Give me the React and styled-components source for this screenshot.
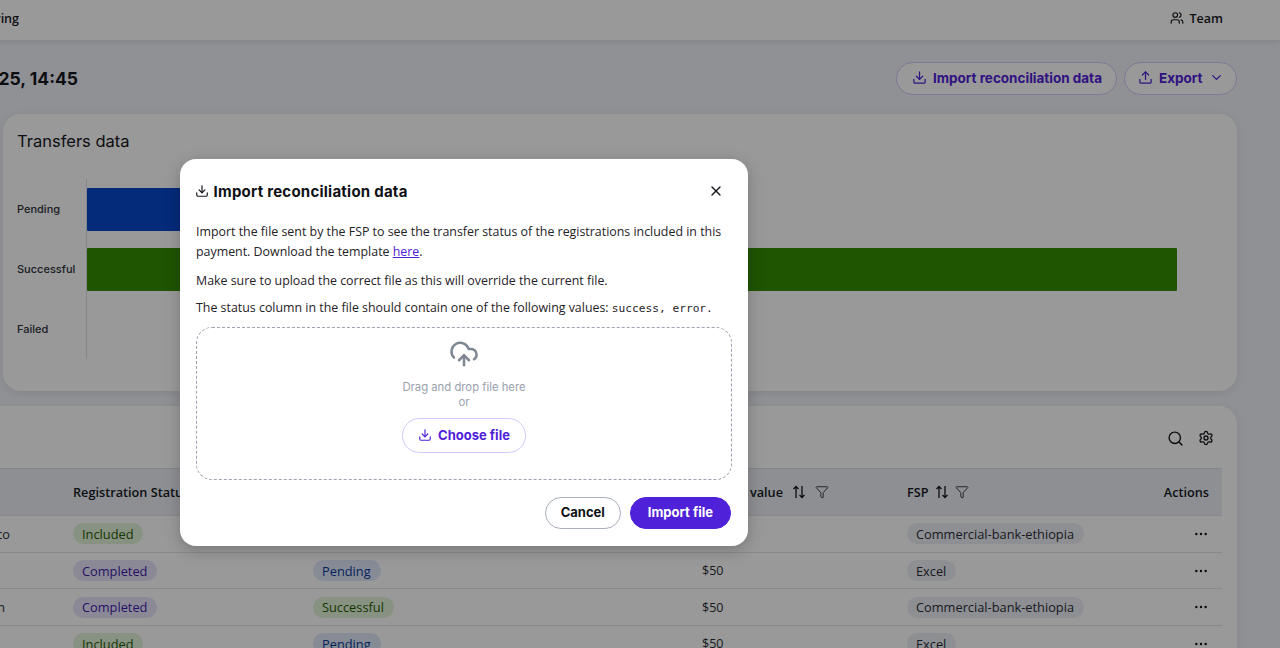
import React from 'react';
import styled, { createGlobalStyle } from 'styled-components';
import {
  ChevronDown,
  CloudUpload,
  Download,
  Ellipsis,
  Funnel,
  Search,
  Settings,
  Upload,
  Users,
  X,
} from 'lucide-react';

const heading = `Inter, "Liberation Sans", sans-serif`;
const body = `"Open Sans", "Noto Sans", sans-serif`;
const purple = '#4f21d8';

const GlobalStyle = createGlobalStyle`
  html, body {
    margin: 0;
    height: 100%;
    overflow: hidden;
    background: #f0f2f7;
    font-family: ${body};
    color: #16181d;
  }
  * { box-sizing: border-box; }
`;

const Viewport = styled.div`
  position: relative;
  width: 1280px;
  height: 648px;
  overflow: hidden;
`;

// the page is scrolled sideways in the reference, so its first 200px are cut off
const Page = styled.div`
  display: flex;
  flex-direction: column;
  width: 1480px;
  margin-left: -200px;
`;

const TopBar = styled.header`
  display: flex;
  align-items: center;
  justify-content: space-between;
  height: 41px;
  padding: 0 57px 4px 0;
  background: #fff;
  border-bottom: 1px solid #dfe3ea;
  box-shadow: 0 2px 6px rgba(30, 40, 60, 0.08);
  font-size: 12.5px;
  font-weight: 600;
`;

const NavLeft = styled.span`
  width: 219px;
  text-align: right;
`;

const NavRight = styled.span`
  display: flex;
  align-items: center;
  gap: 6px;
`;

const TitleRow = styled.div`
  display: flex;
  align-items: center;
  justify-content: space-between;
  height: 33px;
  margin-top: 21px;
  padding-right: 43px;
`;

const PageTitle = styled.h1`
  width: 278px;
  margin: 0;
  font-family: ${heading};
  font-size: 17.5px;
  font-weight: 700;
  text-align: right;
  white-space: nowrap;
`;

const Actions = styled.div`
  display: flex;
  gap: 7px;
`;

const Button = styled.button`
  display: inline-flex;
  align-items: center;
  justify-content: center;
  gap: 6px;
  height: ${(p) => p.$height || 33}px;
  padding: 0 ${(p) => p.$pad || 15}px 2px;
  border: 1px solid
    ${(p) => (p.$variant === 'solid' ? purple : p.$variant === 'plain' ? '#a9b0bb' : '#d3c8fb')};
  border-radius: 999px;
  background: ${(p) => (p.$variant === 'solid' ? purple : '#fff')};
  color: ${(p) => (p.$variant === 'solid' ? '#fff' : p.$variant === 'plain' ? '#0f1116' : purple)};
  font-family: ${heading};
  font-size: ${(p) => p.$size || 13}px;
  font-weight: 700;
  white-space: nowrap;
`;

const ChartCard = styled.section`
  height: 277px;
  margin: 19px 43px 0 203px;
  padding: 17px 14px;
  border-radius: 18px;
  background: #fff;
  box-shadow: 0 2px 8px rgba(30, 40, 60, 0.1);
`;

const CardTitle = styled.h2`
  margin: 0;
  font-family: ${heading};
  font-size: 16.5px;
  line-height: 21px;
  font-weight: 400;
`;

const Chart = styled.div`
  display: grid;
  grid-template-columns: 69px 1fr;
  grid-auto-rows: 60px;
  margin-top: 27px;
`;

const ChartLabel = styled.div`
  display: flex;
  align-items: center;
  font-family: ${heading};
  font-size: 11px;
  font-weight: 500;
  color: #2f333b;
`;

const ChartTrack = styled.div`
  display: flex;
  align-items: center;
  border-left: 1px solid #dde0e6;
`;

const ChartBar = styled.div`
  height: 43px;
  border-radius: 1px;
  background: ${(p) => p.$color};
`;

const TableCard = styled.section`
  height: 400px;
  margin: 15px 43px 0 0;
  padding: 0 15px 0 0;
  border-radius: 18px;
  background: #fff;
  box-shadow: 0 2px 8px rgba(30, 40, 60, 0.1);
`;

const TableTools = styled.div`
  display: flex;
  align-items: center;
  justify-content: flex-end;
  gap: 14px;
  height: 62px;
  padding: 2px 8px 0 0;
`;

const HeadRow = styled.div`
  display: grid;
  grid-template-columns: 273px 240px 382px 212px 1fr auto;
  align-items: center;
  height: 48px;
  background: #ebeff5;
  border-top: 1px solid #d8e0ea;
  border-bottom: 1px solid #dfe3ea;
  font-size: 12.7px;
  font-weight: 600;
`;

const DataRow = styled(HeadRow)`
  height: 36.7px;
  background: #fff;
  border-top: 0;
  font-weight: 400;
`;

const HeadCell = styled.div`
  display: flex;
  align-items: center;
  gap: ${(p) => p.$gap || 8}px;
  white-space: nowrap;
  overflow: hidden;
`;

const ActionCell = styled.div`
  display: flex;
  justify-content: flex-end;
  padding-right: 13px;
`;

const NameCell = styled.div`
  padding-right: ${(p) => p.$inset}px;
  text-align: right;
  color: #2b2e36;
`;

const ValueCell = styled.div`
  padding-left: 7px;
  font-size: 12.5px;
  color: #2b2e36;
`;

const PILLS = {
  green: ['#e3f3da', '#235c00'],
  purple: ['#e9e4fb', '#3e1aa8'],
  blue: ['#dfe8f9', '#0a3a99'],
  grey: ['#eceff4', '#2b2e36'],
};

const Pill = styled.span`
  display: inline-flex;
  align-items: center;
  height: 21px;
  padding: 0 10px 0 9px;
  border-radius: 999px;
  background: ${(p) => PILLS[p.$tone][0]};
  color: ${(p) => PILLS[p.$tone][1]};
  font-size: 12.8px;
  font-weight: 500;
`;

const Backdrop = styled.div`
  position: absolute;
  inset: 0;
  padding: 159px 0 0 179.5px;
  background: rgba(0, 0, 0, 0.4);
`;

const Dialog = styled.div`
  display: flex;
  flex-direction: column;
  width: 568px;
  height: 387px;
  padding: 0 16px 0 16.5px;
  border-radius: 16px;
  background: #fff;
  box-shadow: 0 4px 16px rgba(0, 0, 0, 0.22);
`;

const DialogHead = styled.div`
  display: flex;
  align-items: center;
  justify-content: space-between;
  height: 63px;
  padding: 1px 8px 0 0;
  flex: none;
`;

const DialogTitle = styled.h2`
  display: flex;
  align-items: center;
  gap: 5px;
  margin: 0 0 0 -1.5px;
  font-family: ${heading};
  font-size: 15px;
  letter-spacing: 0.24px;
  font-weight: 700;
  color: #0f1116;
`;

const Paragraph = styled.p`
  margin: 0 0 ${(p) => p.$gap}px;
  font-size: 12.4px;
  line-height: 20px;
  color: #1f2228;

  a {
    color: ${purple};
  }
  code {
    font-family: "DejaVu Sans Mono", "Liberation Mono", monospace;
    font-size: 11.2px;
  }
`;

const DropZone = styled.div`
  display: flex;
  flex-direction: column;
  align-items: center;
  flex: none;
  width: 536px;
  height: 153px;
  padding-top: 11px;
  border: 1px dashed #9ca3ae;
  border-radius: 16px;
`;

const DropText = styled.div`
  margin-top: 11px;
  font-family: ${heading};
  font-size: 11.3px;
  line-height: 15px;
  text-align: center;
  color: #9aa1ac;
`;

const ChooseWrap = styled.div`
  margin-top: 8px;
`;

const DialogFoot = styled.div`
  display: flex;
  justify-content: flex-end;
  gap: 9px;
  margin-top: 17px;
  padding-right: 0.5px;
`;

const SortIcon = () => (
  <svg width="14" height="14" viewBox="0 0 14 14" fill="none" stroke="currentColor" strokeWidth="1.3">
    <path d="M4 13V1.5M1.5 4L4 1.5 6.5 4" />
    <path d="M10 1v11.5M7.5 10l2.5 2.5 2.5-2.5" />
  </svg>
);

const rows = [
  { name: 'Francisco', inset: 63, reg: ['Included', 'green'], fsp: 'Commercial-bank-ethiopia' },
  { name: 'Amal', inset: 120, reg: ['Completed', 'purple'], status: ['Pending', 'blue'], fsp: 'Excel' },
  { name: 'Martin', inset: 68, reg: ['Completed', 'purple'], status: ['Successful', 'green'], fsp: 'Commercial-bank-ethiopia' },
  { name: 'Ines', inset: 120, reg: ['Included', 'green'], status: ['Pending', 'blue'], fsp: 'Excel' },
];

const bars = [
  { label: 'Pending', color: '#0747cb', width: 300 },
  { label: 'Successful', color: '#348c00', width: 1090 },
  { label: 'Failed', color: 'transparent', width: 0 },
];

const App = () => (
  <Viewport>
    <GlobalStyle />
    <Page>
      <TopBar>
        <NavLeft>Monitoring</NavLeft>
        <NavRight>
          <Users size={14} />
          Team
        </NavRight>
      </TopBar>

      <TitleRow>
        <PageTitle>Payment 01/07/2025, 14:45</PageTitle>
        <Actions>
          <Button $size={13.5} $pad={14.5}>
            <Download size={15} />
            Import reconciliation data
          </Button>
          <Button $size={13.5} $pad={12.5}>
            <Upload size={15} />
            Export
            <ChevronDown size={15} />
          </Button>
        </Actions>
      </TitleRow>

      <ChartCard>
        <CardTitle>Transfers data</CardTitle>
        <Chart>
          {bars.map((bar) => (
            <React.Fragment key={bar.label}>
              <ChartLabel>{bar.label}</ChartLabel>
              <ChartTrack>
                <ChartBar $color={bar.color} style={{ width: bar.width }} />
              </ChartTrack>
            </React.Fragment>
          ))}
        </Chart>
      </ChartCard>

      <TableCard>
        <TableTools>
          <Search size={17} />
          <Settings size={16} />
        </TableTools>
        <HeadRow>
          <HeadCell>Name</HeadCell>
          <HeadCell>Registration Status</HeadCell>
          <HeadCell>Transfer Status</HeadCell>
          <HeadCell $gap={9}>
            Transfer value <SortIcon /> <Funnel size={14} strokeWidth={1.4} />
          </HeadCell>
          <HeadCell $gap={6}>
            FSP <SortIcon /> <Funnel size={14} strokeWidth={1.4} />
          </HeadCell>
          <ActionCell>Actions</ActionCell>
        </HeadRow>
        {rows.map((row) => (
          <DataRow key={row.name}>
            <NameCell $inset={row.inset}>{row.name}</NameCell>
            <div>
              <Pill $tone={row.reg[1]}>{row.reg[0]}</Pill>
            </div>
            <div>{row.status && <Pill $tone={row.status[1]}>{row.status[0]}</Pill>}</div>
            <ValueCell>$50</ValueCell>
            <div>
              <Pill $tone="grey">{row.fsp}</Pill>
            </div>
            <ActionCell>
              <Ellipsis size={16} strokeWidth={1.7} />
            </ActionCell>
          </DataRow>
        ))}
      </TableCard>
    </Page>

    <Backdrop>
      <Dialog>
        <DialogHead>
          <DialogTitle>
            <Download size={14} />
            Import reconciliation data
          </DialogTitle>
          <X size={16} />
        </DialogHead>
        <Paragraph $gap={9}>
          Import the file sent by the FSP to see the transfer status of the registrations included
          in this payment. Download the template <a href="#here">here</a>.
        </Paragraph>
        <Paragraph $gap={7}>
          Make sure to upload the correct file as this will override the current file.
        </Paragraph>
        <Paragraph $gap={8}>
          The status column in the file should contain one of the following values:{' '}
          <code>success, error.</code>
        </Paragraph>
        <DropZone>
          <CloudUpload size={30} color="#7f8894" strokeWidth={2} />
          <DropText>
            Drag and drop file here
            <br />
            or
          </DropText>
          <ChooseWrap>
            <Button $height={35}>
              <Download size={14} />
              Choose file
            </Button>
          </ChooseWrap>
        </DropZone>
        <DialogFoot>
          <Button $variant="plain" $height={32}>
            Cancel
          </Button>
          <Button $variant="solid" $height={32} $pad={17}>
            Import file
          </Button>
        </DialogFoot>
      </Dialog>
    </Backdrop>
  </Viewport>
);

export default App;
